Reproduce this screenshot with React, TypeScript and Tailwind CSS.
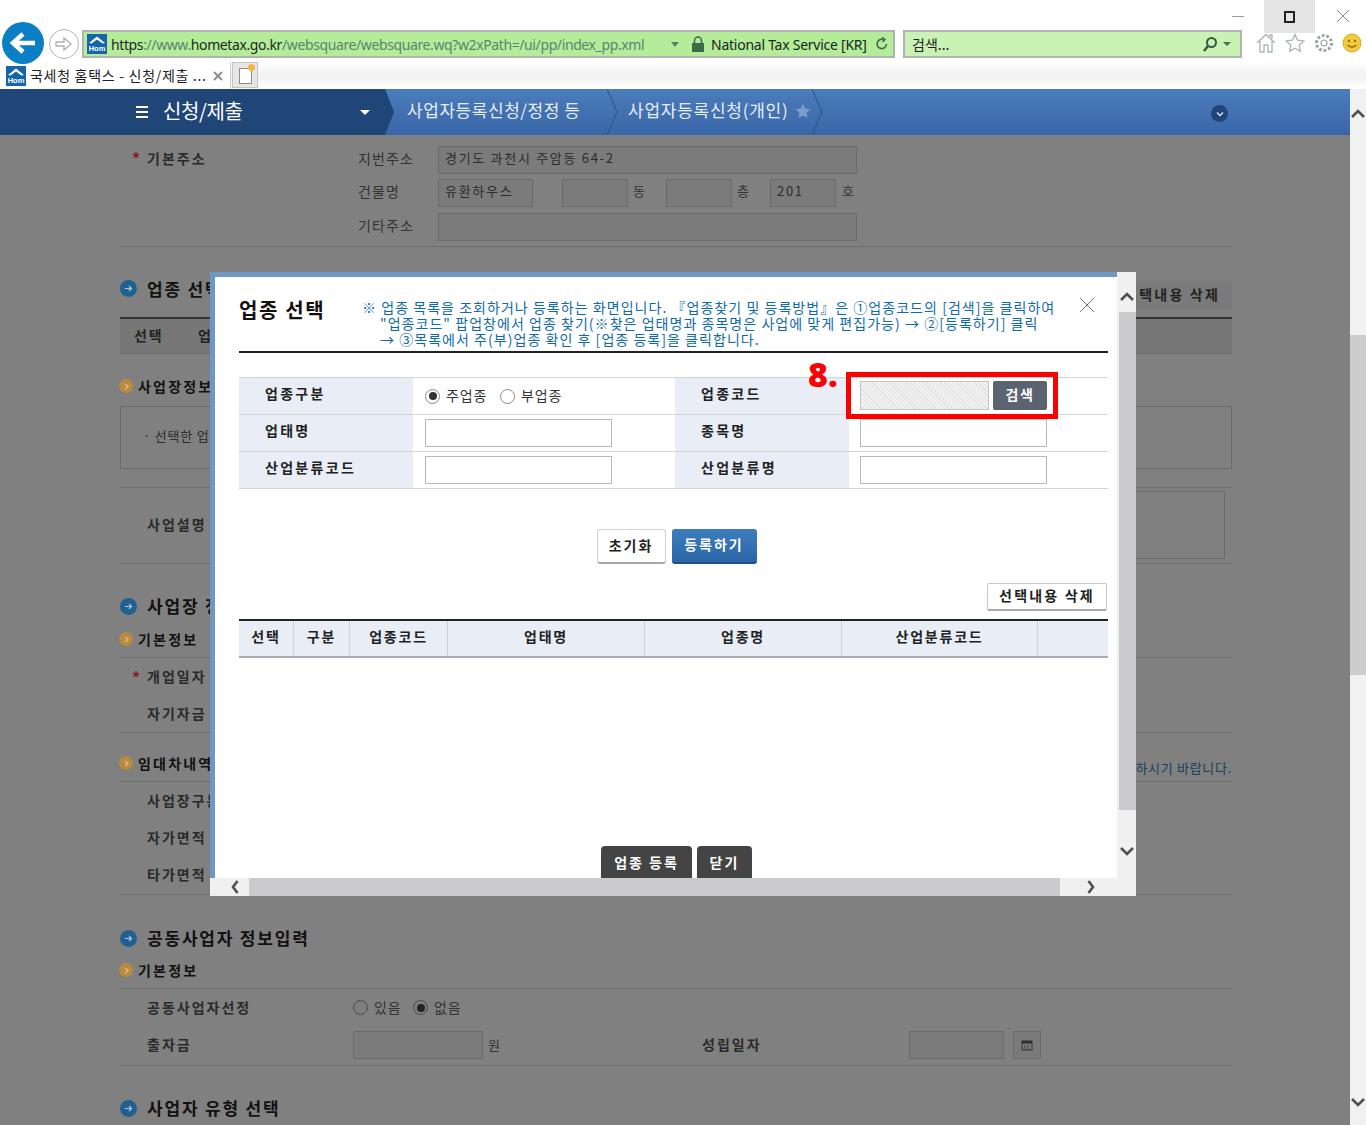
import type { ReactNode } from 'react';

const kr = 'font-["Noto_Sans_CJK_KR","Noto_Sans",sans-serif]';

function Favicon({ size = 20 }: { size?: number }) {
  return (
    <svg width={size} height={size} viewBox="0 0 20 20" className="shrink-0">
      <rect width="20" height="20" fill="#1565ad" />
      <path d="M2 9 L10 2.5 L18 9 L15.5 9.5 L10 5.5 L4.5 9.5 Z" fill="#fff" />
      <text x="10" y="17" textAnchor="middle" fontSize="7.5" fontWeight="700" fill="#fff" fontFamily="Liberation Sans">Hom</text>
    </svg>
  );
}

function Chevron({ dir, className }: { dir: 'up' | 'down' | 'left' | 'right'; className?: string }) {
  const d = { up: 'M1 10 L7 4 L13 10', down: 'M1 4 L7 10 L13 4', left: 'M9.5 1 L5 7 L9.5 13', right: 'M4.5 1 L9 7 L4.5 13' }[dir];
  return (
    <svg width="14" height="14" viewBox="0 0 14 14" className={className}>
      <path d={d} fill="none" stroke="#505050" strokeWidth="2.6" />
    </svg>
  );
}

function BrowserChrome() {
  return (
    <div className="h-[89px] bg-white flex flex-col">
      <div className="h-[62px] flex relative">
        <div className="w-[46px] pl-[2px] pt-[22px]">
          <div className="w-[42px] h-[42px] rounded-full bg-[#0b7fc5] flex items-center justify-center">
            <svg width="28" height="24" viewBox="0 0 28 24">
              <path d="M26 12 H5 M14 3 L4 12 L14 21" fill="none" stroke="#fff" strokeWidth="4.5" />
            </svg>
          </div>
        </div>
        <div className="w-[36px] pl-[3px] pt-[29px]">
          <div className="w-[30px] h-[30px] rounded-full border border-[#b5b5b5] flex items-center justify-center">
            <svg width="20" height="18" viewBox="0 0 20 18">
              <path d="M2 7 H10 V3 L17 9 L10 15 V11 H2 Z" fill="none" stroke="#b0b0b0" strokeWidth="1.3" />
            </svg>
          </div>
        </div>
        <div className="mt-[30px] w-[813px] h-[28px] border-2 border-[#b2b2b2] bg-[#b4ec9a] flex items-center pl-[3px] font-['Noto_Sans',sans-serif] text-[14px]">
          <Favicon />
          <span className="ml-[4px] w-[537px] whitespace-nowrap text-[#5b8470] tracking-[-0.39px]">
            <span className="text-[#1c2a1c]">https</span>://www.<span className="text-[#1c2a1c]">hometax.go.kr</span>/websquare/websquare.wq?w2xPath=/ui/pp/index_pp.xml
          </span>
          <span className="ml-[23px] w-0 h-0 border-x-[4px] border-x-transparent border-t-[5px] border-t-[#5d7d68]" />
          <svg width="14" height="16" viewBox="0 0 14 16" className="ml-[12px]">
            <path d="M3.5 7 V4.5 a3.5 3.5 0 0 1 7 0 V7" fill="none" stroke="#3f6a48" strokeWidth="1.6" />
            <rect x="1" y="7" width="12" height="9" fill="#3f6a48" />
          </svg>
          <span className="ml-[6px] text-[#16261a] whitespace-nowrap tracking-[-0.25px]">National Tax Service [KR]</span>
          <svg width="14" height="14" viewBox="0 0 14 14" className="ml-[8px]">
            <path d="M11.5 7 A4.7 4.7 0 1 1 8 2.4 M7 0.5 L10 2.5 L7.5 5" fill="none" stroke="#43684c" strokeWidth="1.6" />
          </svg>
        </div>
        <div className={`ml-[8px] mt-[30px] w-[339px] h-[28px] border-2 border-[#b2b2b2] bg-[#c9f3b4] flex items-center pl-[7px] pr-[9px] text-[14px] text-[#222] ${kr}`}>
          <span className="flex-1">검색...</span>
          <svg width="16" height="16" viewBox="0 0 16 16">
            <circle cx="9.5" cy="6.5" r="4.5" fill="none" stroke="#38573f" strokeWidth="2" />
            <path d="M6 10 L2 15" stroke="#38573f" strokeWidth="2.4" />
          </svg>
          <span className="ml-[5px] w-0 h-0 border-x-[4px] border-x-transparent border-t-[4px] border-t-[#4b6a52]" />
        </div>
        <div className="ml-[14px] pt-[33px] flex gap-[9px] h-fit">
          <svg width="20" height="20" viewBox="0 0 20 20">
            <path d="M1 10 L10 1.5 L19 10 M4 8 V19 H8 V12 H12 V19 H16 V8 M14 4 V2 H16 V6" fill="none" stroke="#a8b4b8" strokeWidth="1.3" />
          </svg>
          <svg width="20" height="20" viewBox="0 0 20 20">
            <path d="M10 1.5 L12.6 7.2 L18.8 7.9 L14.2 12.1 L15.4 18.3 L10 15.2 L4.6 18.3 L5.8 12.1 L1.2 7.9 L7.4 7.2 Z" fill="none" stroke="#a8b4b8" strokeWidth="1.3" />
          </svg>
          <svg width="20" height="20" viewBox="0 0 20 20">
            <circle cx="10" cy="10" r="3" fill="none" stroke="#98a4a8" strokeWidth="1.2" />
            <circle cx="10" cy="10" r="7.5" fill="none" stroke="#98a4a8" strokeWidth="3" strokeDasharray="2.7 2" />
          </svg>
          <svg width="20" height="20" viewBox="0 0 20 20" className="-ml-[1px]">
            <circle cx="10" cy="10" r="9" fill="#f3cb3a" stroke="#d2a92c" />
            <circle cx="7" cy="8" r="1.2" fill="#8a6a10" />
            <circle cx="13" cy="8" r="1.2" fill="#8a6a10" />
            <path d="M5.5 12 Q10 16 14.5 12" fill="none" stroke="#8a6a10" strokeWidth="1.2" />
          </svg>
        </div>
        {/* window buttons sit over the top of the toolbar */}
        <div className="absolute left-[1232px] top-[16px] w-[12px] h-px bg-[#9a9a9a]" />
        <div className="absolute left-[1264px] top-0 w-[51px] h-[33px] bg-[#e5e5e5] flex items-center justify-center">
          <div className="w-[11px] h-[12px] border-2 border-[#222]" />
        </div>
        <svg width="14" height="14" viewBox="0 0 14 14" className="absolute left-[1336px] top-[9px]">
          <path d="M1 1 L13 13 M13 1 L1 13" stroke="#8a8a8a" strokeWidth="1" />
        </svg>
      </div>
      <div className="flex-1 flex bg-gradient-to-b from-white via-[#f1f1f1] to-white">
        <div className={`w-[231px] bg-white flex items-center pl-[6px] border-r border-[#cfcfcf] text-[14px] text-[#222] ${kr}`}>
          <Favicon />
          <span className="ml-[4px] w-[184px] whitespace-nowrap tracking-[0.7px]">국세청 홈택스 - 신청/제출 ...</span>
          <svg width="10" height="10" viewBox="0 0 10 10" className="ml-[-1px]">
            <path d="M1 1 L9 9 M9 1 L1 9" stroke="#8e8e8e" strokeWidth="2" />
          </svg>
        </div>
        <div className="w-[26px] h-[26px] ml-px bg-[#e6e6e6] border border-[#c4c4c4] flex items-center justify-center relative">
          <div className="w-[13px] h-[16px] bg-white border border-[#8c8c8c] mt-[2px]" />
          <div className="absolute right-[2px] top-[1px] w-[7px] h-[7px] rounded-full bg-[#f6b73c]" />
        </div>
      </div>
    </div>
  );
}

function NavBar() {
  return (
    <div className={`h-[46px] flex text-white ${kr}`}>
      <div className="flex-1 flex bg-gradient-to-b from-[#4b7cbb] to-[#3a66a8]">
        <div className="w-[385px] bg-[#1f4677] flex items-center pl-[136px]">
          <div className="w-[12px] h-[12px] border-y-2 border-white flex items-center">
            <div className="w-full h-[2px] bg-white" />
          </div>
          <span className="ml-[15px] pb-[3px] text-[20px] tracking-[-0.4px] w-[197px]">신청/제출</span>
          <span className="w-0 h-0 border-x-[5px] border-x-transparent border-t-[5px] border-t-white" />
        </div>
        <svg width="10" height="46" viewBox="0 0 10 46" className="shrink-0">
          <path d="M0 0 L9 23 L0 46 Z" fill="#1f4677" />
        </svg>
        <span className="ml-[12px] mt-[8px] text-[17px] w-[200px] whitespace-nowrap text-[#e6eef8] tracking-[0.55px]">사업자등록신청/정정 등</span>
        <svg width="12" height="46" viewBox="0 0 12 46" className="shrink-0">
          <path d="M0 0 L10 23 L0 46" fill="none" stroke="#2b5289" />
        </svg>
        <span className="ml-[9px] mt-[8px] text-[17px] w-[160px] whitespace-nowrap text-[#e6eef8] tracking-[0.75px]">사업자등록신청(개인)</span>
        <svg width="16" height="16" viewBox="0 0 20 20" className="ml-[7px] mt-[14px]">
          <path d="M10 1 L12.8 7 L19.4 7.8 L14.5 12.3 L15.8 18.9 L10 15.6 L4.2 18.9 L5.5 12.3 L0.6 7.8 L7.2 7 Z" fill="#7c9ccb" />
        </svg>
        <svg width="12" height="46" viewBox="0 0 12 46" className="shrink-0 ml-[1px]">
          <path d="M0 0 L10 23 L0 46" fill="none" stroke="#2b5289" />
        </svg>
        <div className="ml-[387px] mt-[16px] w-[17px] h-[17px] rounded-full bg-[#1f4677] flex items-center justify-center">
          <svg width="10" height="10" viewBox="0 0 10 10">
            <path d="M2 3.5 L5 6.5 L8 3.5" fill="none" stroke="#dbe6f3" strokeWidth="1.4" />
          </svg>
        </div>
      </div>
    </div>
  );
}

function SectionTitle({ children, className }: { children: ReactNode; className?: string }) {
  return (
    <div className={`flex items-center gap-[10px] text-[17px] font-bold tracking-[1.8px] text-[#111] ${className ?? ''}`}>
      <span className="w-[17px] h-[17px] rounded-full bg-[#21608f] flex items-center justify-center">
        <svg width="9" height="9" viewBox="0 0 9 9">
          <path d="M1 4.5 H7 M5 2 L7.5 4.5 L5 7" fill="none" stroke="#a9c9e0" strokeWidth="1.2" />
        </svg>
      </span>
      {children}
    </div>
  );
}

function SubTitle({ children, className }: { children: ReactNode; className?: string }) {
  return (
    <div className={`flex items-center gap-[5px] text-[14px] font-bold tracking-[2.2px] text-[#111] ${className ?? ''}`}>
      <span className="w-[14px] h-[14px] -ml-px rounded-full bg-[#b98a3f] flex items-center justify-center">
        <svg width="7" height="7" viewBox="0 0 7 7">
          <path d="M2 1 L5 3.5 L2 6" fill="none" stroke="#e3c48e" strokeWidth="1.2" />
        </svg>
      </span>
      {children}
    </div>
  );
}

function BgRow({ label, star, children }: { label: string; star?: boolean; children?: ReactNode }) {
  return (
    <div className="h-[37px] flex items-center text-[14px] tracking-[2px] font-bold text-[#2a2a2a]">
      <span className="w-[12px] ml-[12px] text-[#8a1c2c] text-[16px]">{star ? '*' : ''}</span>
      <span className="ml-[3px] w-[196px]">{label}</span>
      {children}
    </div>
  );
}

function BgField({ w, text, className }: { w: number; text?: string; className?: string }) {
  return (
    <div
      className={`h-[28px] border border-[#6a6a6a] bg-[#7b7b7b] pl-[6px] pb-[4px] flex items-center text-[13px] font-normal tracking-[1.7px] text-[#2c2c2c] ${className ?? ''}`}
      style={{ width: w }}
    >
      {text}
    </div>
  );
}

function BgRadio({ on }: { on?: boolean }) {
  return (
    <span className="w-[15px] h-[15px] rounded-full border border-[#4a4a4a] bg-[#7e7e7e] flex items-center justify-center">
      {on && <span className="w-[8px] h-[8px] rounded-full bg-[#222]" />}
    </span>
  );
}

function PageBehind() {
  const line = 'border-b border-[#6d6d6d]';
  const addrLabel = 'w-[80px] pb-[4px]';
  return (
    <div className={`h-[990px] bg-[#808080] overflow-hidden pl-[120px] ${kr}`}>
      <div className="w-[1112px]">
        <div className={`h-[112px] flex ${line}`}>
          <div className="w-[223px] pt-[13px] flex items-start text-[14px] font-bold tracking-[2px] text-[#2a2a2a]">
            <span className="w-[12px] ml-[12px] text-[#8a1c2c] text-[16px] leading-[20px]">*</span>
            <span className="ml-[3px]">기본주소</span>
          </div>
          <div className="pt-[11px] flex flex-col gap-[5px] text-[14px] tracking-[1.1px] text-[#333]">
            <div className="flex items-center h-[28px] pl-[15px]">
              <span className={addrLabel}>지번주소</span>
              <BgField w={419} text="경기도 과천시 주암동 64-2" />
            </div>
            <div className="flex items-center h-[28px] pl-[15px]">
              <span className={addrLabel}>건물명</span>
              <BgField w={95} text="유환하우스" />
              <BgField w={66} className="ml-[29px]" />
              <span className="ml-[5px] w-[33px] pb-[4px] text-[13px]">동</span>
              <BgField w={66} />
              <span className="ml-[5px] w-[33px] pb-[4px] text-[13px]">층</span>
              <BgField w={66} text="201" />
              <span className="ml-[6px] pb-[4px] text-[13px]">호</span>
            </div>
            <div className="flex items-center h-[28px] pl-[15px] mt-[1px]">
              <span className={addrLabel}>기타주소</span>
              <BgField w={419} />
            </div>
          </div>
        </div>

        <div className="h-[36px] mt-[34px] flex items-start justify-between">
          <SectionTitle className="-mt-[5px]">업종 선택</SectionTitle>
          <div className="h-[29px] w-[120px] bg-[#7a7a7a] pr-[12px] text-right text-[14px] font-bold tracking-[2.2px] text-[#222] leading-[27px] whitespace-nowrap">선택내용 삭제</div>
        </div>
        <div className="h-[2px] bg-[#333]" />
        <div className={`h-[35px] pb-[2px] flex items-center bg-[#777] text-[14px] font-bold tracking-[1.8px] text-[#222] ${line}`}>
          <span className="ml-[14px] w-[64px]">선택</span>
          <span>업종코드</span>
        </div>
        <SubTitle className="mt-[22px] h-[20px]">사업장정보</SubTitle>
        <div className="mt-[10px] h-[63px] border border-[#6b6b6b] flex items-center pl-[22px] pb-[4px] text-[13px] tracking-[0.8px] text-[#2c2c2c]">
          · 선택한 업종
        </div>
        <div className={`mt-[18px] border-t border-[#6d6d6d] ${line} flex items-center h-[77px]`}>
          <span className="ml-[27px] pb-[2px] text-[14px] font-bold tracking-[2px] text-[#2a2a2a]">사업설명</span>
          <div className="ml-auto mr-[7px] mb-[2px] w-[400px] h-[68px] border border-[#6b6b6b]" />
        </div>

        <SectionTitle className="mt-[32px] h-[20px]">사업장 정보입력</SectionTitle>
        <SubTitle className="mt-[13px] h-[20px]">기본정보</SubTitle>
        <div className={`mt-[8px] border-t border-[#6d6d6d] ${line}`}>
          <BgRow label="개업일자" star />
          <BgRow label="자기자금" />
        </div>
        <div className="relative">
          <SubTitle className="mt-[20px] h-[20px]">임대차내역</SubTitle>
          <span className="absolute right-0 top-[5px] text-[13px] tracking-[0.7px] text-[#173f5c]">하시기 바랍니다.</span>
        </div>
        <div className={`mt-[8px] pb-px border-t border-[#6d6d6d] ${line}`}>
          <BgRow label="사업장구분" />
          <BgRow label="자가면적" />
          <BgRow label="타가면적" />
        </div>

        <SectionTitle className="mt-[33px] h-[20px]">공동사업자 정보입력</SectionTitle>
        <SubTitle className="mt-[12px] h-[20px]">기본정보</SubTitle>
        <div className={`mt-[8px] pb-[2px] border-t border-[#6d6d6d] ${line}`}>
          <BgRow label="공동사업자선정">
            <div className="ml-[10px] flex items-center gap-[6px] font-normal text-[14px] text-[#333] tracking-[0.8px]">
              <BgRadio />
              <span className="w-[33px]">있음</span>
              <BgRadio on />
              <span>없음</span>
            </div>
          </BgRow>
          <BgRow label="출자금">
            <BgField w={130} className="ml-[10px]" />
            <span className="ml-[5px] w-[214px] font-normal text-[13px] text-[#333]">원</span>
            <span className="w-[207px]">성립일자</span>
            <BgField w={95} />
            <span className="ml-[9px] w-[28px] h-[28px] border border-[#6b6b6b] bg-[#7a7a7a] flex items-center justify-center">
              <svg width="12" height="12" viewBox="0 0 12 12">
                <rect x="1" y="2" width="10" height="9" fill="none" stroke="#2e2e2e" />
                <rect x="1" y="2" width="10" height="2.5" fill="#2e2e2e" />
                <path d="M3 7 H9 M3 9 H9" stroke="#2e2e2e" strokeDasharray="1 1" />
              </svg>
            </span>
          </BgRow>
        </div>
        <SectionTitle className="mt-[32px] h-[20px]">사업자 유형 선택</SectionTitle>
      </div>
    </div>
  );
}

function PageScrollbar() {
  return (
    <div className="w-[16px] shrink-0 bg-[#f1f1f1] flex flex-col items-center relative">
      <Chevron dir="up" className="mt-[18px] shrink-0" />
      <div className="w-full h-[340px] bg-[#cdcdcd] mt-[214px]" />
      <Chevron dir="down" className="absolute bottom-[16px]" />
    </div>
  );
}

function Th({ children }: { children: ReactNode }) {
  return (
    <div className="w-[174px] shrink-0 bg-[#e8edf6] flex items-center pl-[26px] pb-[5px] text-[14px] font-bold tracking-[2.3px] text-[#222]">
      {children}
    </div>
  );
}

function Radio({ on }: { on?: boolean }) {
  return (
    <span className="w-[15px] h-[15px] rounded-full border border-[#8c8c8c] bg-white flex items-center justify-center">
      {on && <span className="w-[8px] h-[8px] rounded-full bg-[#333]" />}
    </span>
  );
}

function TextBox() {
  return <div className="w-[187px] h-[28px] border border-[#b9b9b9] bg-white" />;
}

function FormRow({ children, last }: { children: ReactNode; last?: boolean }) {
  return <div className={`h-[37px] flex border-t border-[#d4d4d4] ${last ? 'h-[38px] border-b' : ''}`}>{children}</div>;
}

const columns = [
  { label: '선택', w: 55 },
  { label: '구분', w: 56 },
  { label: '업종코드', w: 98 },
  { label: '업태명', w: 197 },
  { label: '업종명', w: 197 },
  { label: '산업분류코드', w: 196 },
  { label: '', w: 70 },
];

function Modal() {
  return (
    <div className={`absolute left-[210px] top-[272px] w-[926px] h-[624px] bg-white flex flex-col overflow-hidden ${kr}`}>
      <div className="flex-1 flex min-h-0">
        <div className="flex-1 border-t-[5px] border-l-[5px] border-[#6f97c5] flex flex-col pl-[24px] pr-[9px] min-w-0 relative">
          <div className="h-[76px] flex border-b-2 border-[#222]">
            <h2 className="pt-[18px] w-[123px] text-[20px] font-bold tracking-[1.6px] text-[#111]">업종 선택</h2>
            <div className="pt-[22px] text-[14px] leading-[16px] text-[#0f6aa8] whitespace-nowrap tracking-[1.04px]">
              <div>※ 업종 목록을 조회하거나 등록하는 화면입니다. 『업종찾기 및 등록방법』은 ①업종코드의 [검색]을 클릭하여</div>
              <div className="pl-[18px]">"업종코드" 팝업창에서 업종 찾기(※찾은 업태명과 종목명은 사업에 맞게 편집가능) → ②[등록하기] 클릭</div>
              <div className="pl-[18px]">→ ③목록에서 주(부)업종 확인 후 [업종 등록]을 클릭합니다.</div>
            </div>
          </div>
          <button className="absolute left-[864px] top-[20px]">
            <svg width="16" height="16" viewBox="0 0 16 16" className="block">
              <path d="M1 1 L15 15 M15 1 L1 15" stroke="#777" strokeWidth="1" />
            </svg>
          </button>

          <div className="mt-[24px]">
            <FormRow>
              <Th>업종구분</Th>
              <div className="w-[262px] flex items-center pl-[12px] gap-[6px] text-[14px] text-[#333] tracking-[0.9px]">
                <Radio on />
                <span className="w-[48px] pb-px">주업종</span>
                <Radio />
                <span className="pb-px">부업종</span>
              </div>
              <Th>업종코드</Th>
              <div className="flex items-center pl-[11px] pb-px gap-[4px]">
                <div className="w-[129px] h-[29px] border border-[#c4c4c4] bg-[repeating-linear-gradient(45deg,#f1f1f1,#f1f1f1_2px,#e2e2e2_2px,#e2e2e2_3px)]" />
                <div className="w-[54px] h-[29px] pb-[3px] rounded-[2px] bg-[#5b6270] text-white text-[14px] font-bold tracking-[1.5px] flex items-center justify-center">검색</div>
              </div>
            </FormRow>
            <FormRow>
              <Th>업태명</Th>
              <div className="w-[262px] flex items-center pl-[12px] pb-px"><TextBox /></div>
              <Th>종목명</Th>
              <div className="flex items-center pl-[11px] pb-px"><TextBox /></div>
            </FormRow>
            <FormRow last>
              <Th>산업분류코드</Th>
              <div className="w-[262px] flex items-center pl-[12px] pb-px"><TextBox /></div>
              <Th>산업분류명</Th>
              <div className="flex items-center pl-[11px] pb-px"><TextBox /></div>
            </FormRow>
          </div>

          <div className="mt-[40px] pl-[6px] flex justify-center gap-[6px] text-[14px] font-bold tracking-[2px]">
            <div className="w-[69px] h-[35px] pb-[2px] rounded-[3px] border border-[#d0d0d0] border-b-2 border-b-[#a8a8a8] bg-white flex items-center justify-center text-[#222]">초기화</div>
            <div className="w-[85px] h-[35px] pb-[2px] rounded-[3px] border-b-2 border-b-[#1f4f88] bg-gradient-to-b from-[#3d7dbd] to-[#2b65a8] flex items-center justify-center text-white">등록하기</div>
          </div>

          <div className="mt-[19px] pr-px flex justify-end">
            <div className="w-[120px] h-[28px] pb-[2px] rounded-[2px] border border-[#c8c8c8] border-b-2 border-b-[#aaa] bg-white flex items-center justify-center text-[14px] font-bold tracking-[2.2px] text-[#222]">선택내용 삭제</div>
          </div>

          <div className="mt-[8px] h-[39px] flex border-t-2 border-t-[#222] border-b-2 border-b-[#a9adb3] bg-[#e8edf6]">
            {columns.map((c) => (
              <div
                key={c.w + c.label}
                className="flex items-center justify-center pb-[4px] border-r border-[#ccd1d9] last:border-r-0 text-[14px] font-bold tracking-[1.8px] text-[#222]"
                style={{ width: c.w }}
              >
                {c.label}
              </div>
            ))}
          </div>

          <div className="mt-auto flex justify-center gap-[5px] pl-[6px] text-[14px] font-bold tracking-[2px] text-white">
            <div className="w-[91px] h-[32px] rounded-t-[4px] bg-[#444] flex items-center justify-center">업종 등록</div>
            <div className="w-[55px] h-[32px] rounded-t-[4px] bg-[#444] flex items-center justify-center">닫기</div>
          </div>
        </div>

        <div className="w-[19px] shrink-0 bg-[#f0f0f0] flex flex-col items-center">
          <Chevron dir="up" className="mt-[18px] shrink-0" />
          <div className="ml-[2px] w-[17px] h-[498px] bg-[#cbcbcd] mt-[8px]" />
          <Chevron dir="down" className="mt-[34px] shrink-0" />
        </div>
      </div>
      <div className="h-[18px] shrink-0 bg-[#f0f0f0] flex items-center">
        <Chevron dir="left" className="ml-[18px] shrink-0" />
        <div className="ml-[7px] w-[811px] h-full bg-[#cbcbcd]" />
        <Chevron dir="right" className="ml-[24px] shrink-0" />
      </div>
      {/* red guide marks drawn over the screenshot */}
      <div className="absolute left-[636px] top-[100px] w-[212px] h-[47px] border-[5px] border-[#fe0000]" />
      <div className="absolute left-[598px] top-[80px] text-[34px] leading-[44px] font-extrabold text-[#fe0000] font-['Open_Sans',sans-serif]">8.</div>
    </div>
  );
}

export default function App() {
  return (
    <div className="w-[1366px] h-[1125px] relative overflow-hidden bg-white">
      <BrowserChrome />
      <div className="flex h-[1036px]">
        <div className="w-[1350px] shrink-0">
          <NavBar />
          <PageBehind />
        </div>
        <PageScrollbar />
      </div>
      <Modal />
    </div>
  );
}
